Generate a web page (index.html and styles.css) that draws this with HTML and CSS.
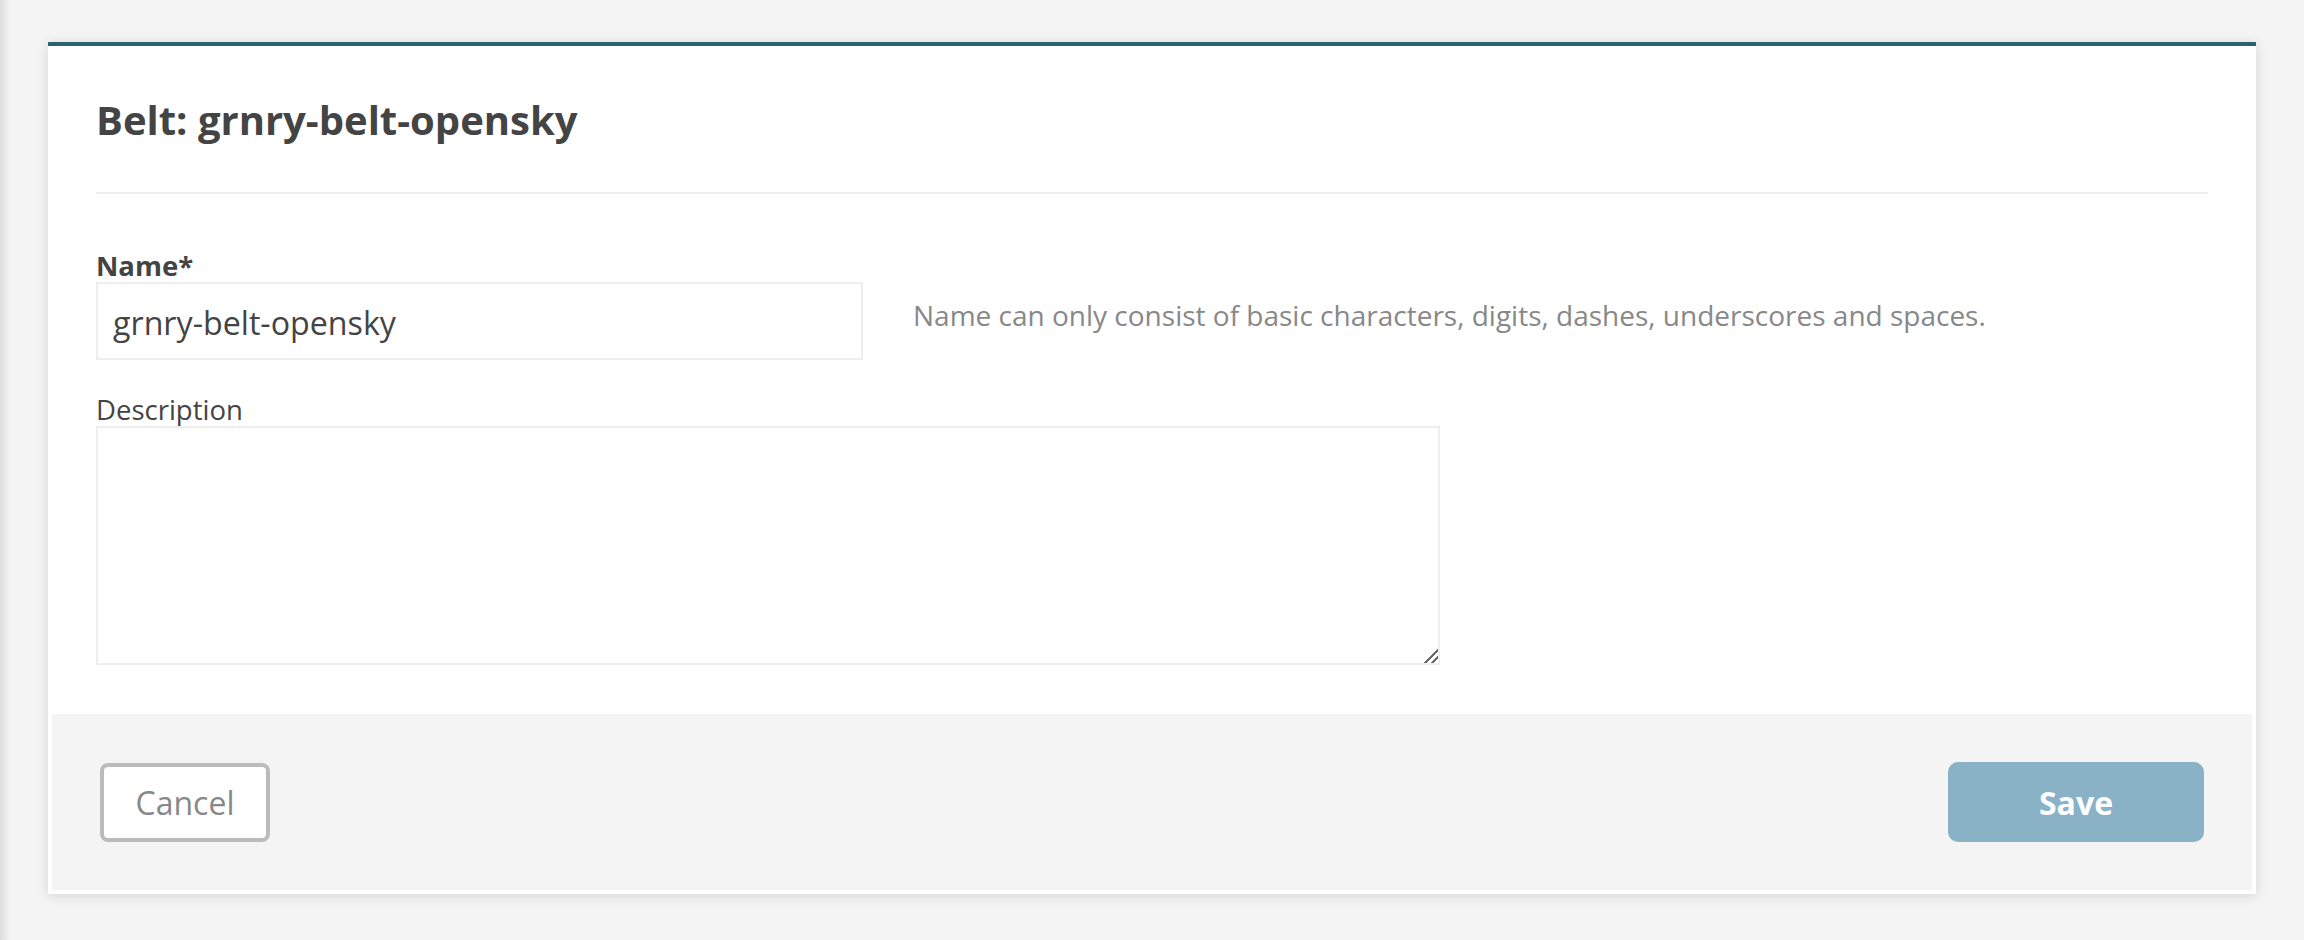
FILE: index.html
```html
<!DOCTYPE html>
<html lang="en">
<head>
<meta charset="utf-8">
<title>Belt: grnry-belt-opensky</title>
<link rel="stylesheet" href="styles.css">
</head>
<body>
<div class="page">
  <div class="edge"></div>
  <main class="main">
    <section class="card">
      <header class="card-head">
        <h1 class="title">Belt: grnry-belt-opensky</h1>
      </header>
      <form class="form">
        <label class="label label-strong" for="name">Name*</label>
        <div class="name-row">
          <input class="input" id="name" type="text" value="grnry-belt-opensky">
          <p class="help">Name can only consist of basic characters, digits, dashes, underscores and spaces.</p>
        </div>
        <label class="label label-desc" for="desc">Description</label>
        <textarea class="textarea" id="desc"></textarea>
      </form>
      <footer class="card-foot">
        <button class="btn btn-cancel" type="button">Cancel</button>
        <button class="btn btn-save" type="button">Save</button>
      </footer>
    </section>
  </main>
</div>
</body>
</html>
```

FILE: styles.css
```css
* { box-sizing: border-box; }

html, body {
  margin: 0;
  height: 100%;
  background: #f4f4f4;
  font-family: "Open Sans", "Liberation Sans", sans-serif;
  color: #444;
}

.page {
  display: flex;
  min-height: 940px;
}

.edge {
  flex: 0 0 12px;
  background: linear-gradient(to right, #dedede 0, #e6e6e6 4px, #efefef 8px, #f4f4f4 12px);
}

.main {
  flex: 1;
  padding: 42px 48px 0 36px;
}

.card {
  background: #fff;
  border-top: 4px solid #2b6470;
  box-shadow: 0 2px 12px rgba(0, 0, 0, 0.13);
  padding: 0 4px 4px;
}

.card-head {
  margin: 0 44px;
  padding: 49px 0 47px;
  border-bottom: 2px solid #eeeeee;
}

.title {
  margin: 0;
  font-size: 40px;
  line-height: 50px;
  font-weight: 700;
  color: #444;
}

.form {
  display: flex;
  flex-direction: column;
  align-items: flex-start;
  padding: 0 44px 49px;
}

.label {
  display: block;
  line-height: 15px;
  color: #444;
}

.label-strong {
  margin-top: 64px;
  margin-bottom: 9px;
  font-size: 27.5px;
  font-weight: 700;
}

.label-desc {
  margin-top: 42px;
  font-size: 27.5px;
  font-weight: 400;
}

.name-row {
  display: flex;
  align-items: center;
  gap: 50px;
}

.input {
  width: 767px;
  height: 78px;
  border: 2px solid #eeeeee;
  border-radius: 0;
  padding: 2px 15px 0;
  font-family: "Open Sans", "Liberation Sans", sans-serif;
  font-size: 32.2px;
  color: #444;
  background: #fff;
  outline: none;
}

.help {
  margin: 0 0 12px;
  font-size: 28px;
  color: #888;
}

.textarea {
  display: block;
  margin-top: 9px;
  width: 1344px;
  height: 239px;
  border: 2px solid #eeeeee;
  border-radius: 0;
  font-family: "Open Sans", "Liberation Sans", sans-serif;
  font-size: 25px;
  background: #fff;
  outline: none;
  resize: both;
}

.textarea::-webkit-resizer {
  background:
    linear-gradient(135deg,
      transparent 0, transparent 52%,
      #6a6a6a 52%, #6a6a6a 62%,
      transparent 62%, transparent 74%,
      #6a6a6a 74%, #6a6a6a 84%,
      transparent 84%);
}

.card-foot {
  height: 176px;
  background: #f4f4f4;
  padding: 0 48px;
  display: flex;
  align-items: center;
  justify-content: space-between;
}

.btn {
  font-family: "Open Sans", "Liberation Sans", sans-serif;
  font-size: 32px;
  cursor: pointer;
}

.btn-cancel {
  width: 170px;
  height: 79px;
  border: 4px solid #bbbbbb;
  border-radius: 8px;
  background: #fff;
  color: #888;
  font-weight: 400;
}

.btn-save {
  width: 256px;
  height: 80px;
  border: 0;
  border-radius: 10px;
  background: #8ab2c6;
  color: #fff;
  font-weight: 700;
}
```
